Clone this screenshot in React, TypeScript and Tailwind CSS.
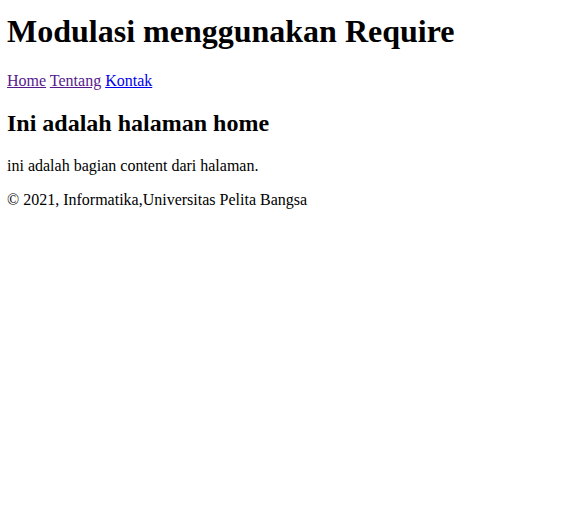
export default function App() {
  return (
    <div className="my-2 ml-[7px] mr-2 font-['Liberation_Serif','Times_New_Roman',serif] text-base text-black">
      <h1 className="mt-[13.44px] mb-[21.44px] text-[32px] font-bold leading-[normal]">Modulasi menggunakan Require</h1>
      <nav className="leading-[normal]">
        <a href="#" className="text-[#551a8b] underline">Home</a>{" "}
        <a href="#" className="text-[#551a8b] underline">Tentang</a>{" "}
        <a href="#" className="text-[#0000ee] underline">Kontak</a>
      </nav>
      <h2 className="my-[19.92px] text-2xl font-bold leading-[normal]">Ini adalah halaman home</h2>
      <p className="my-4 leading-[normal]">ini adalah bagian content dari halaman.</p>
      <footer className="my-4 leading-[normal]">© 2021, Informatika,Universitas Pelita Bangsa</footer>
    </div>
  );
}
